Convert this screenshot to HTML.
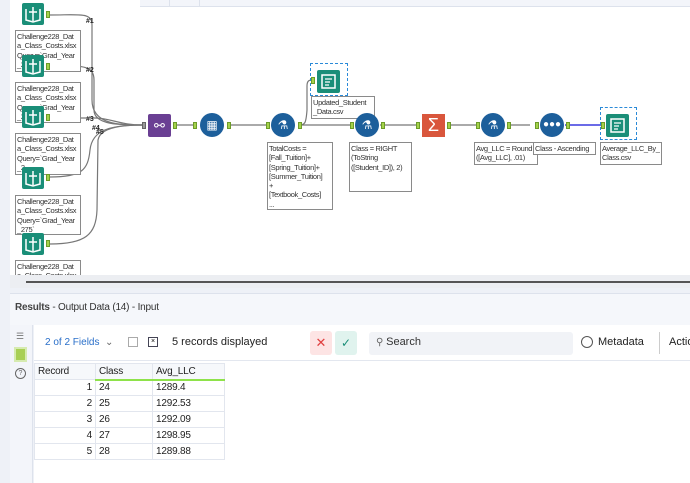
<!DOCTYPE html>
<html><head><meta charset="utf-8"><style>
*{margin:0;padding:0;box-sizing:border-box}
body{width:690px;height:483px;overflow:hidden;background:#eef1f7;font-family:"Liberation Sans",sans-serif;position:relative}
.a{position:absolute}
.lbl{position:absolute;background:#fff;border:1px solid #8a8a8a;font-size:7.5px;line-height:9.3px;color:#333;padding:1px 1px;overflow:hidden;white-space:nowrap;letter-spacing:-0.35px}
.book{position:absolute;width:22px;height:22px;background:#1a8e78;border-radius:2px}
.book svg,.doc svg{position:absolute;left:0;top:0}
.doc{position:absolute;width:23px;height:23px;background:#1a8e78;border-radius:2px}
.anc{position:absolute;width:4px;height:7px;background:#a4d24a;border:1px solid #6d9b2a}
.circ{position:absolute;width:24px;height:24px;border-radius:50%;background:#1d5f9b}
td,th{border:1px solid #e2e6ee;font-size:10px;height:16px;font-weight:normal;color:#222;padding:0 3px;text-align:left;letter-spacing:-0.2px}
</style></head><body>
<div class="a" style="left:10px;top:0;width:680px;height:275px;background:#fff"></div>
<div class="a" style="left:140px;top:0;width:550px;height:7px;background:#f3f5fa;border-bottom:1px solid #dde2ec"></div>
<div class="a" style="left:169px;top:0;width:1px;height:7px;background:#dde2ec"></div>
<div class="a" style="left:199px;top:0;width:1px;height:7px;background:#dde2ec"></div>
<div class="a" style="left:10px;top:275px;width:680px;height:13px;background:#eceef2"></div>
<div class="a" style="left:26px;top:281px;width:664px;height:2px;background:#555"></div>

<svg class="a" style="left:0;top:0" width="690" height="275">
<g fill="none" stroke="#777" stroke-width="1.2">
<path d="M50 15 C80 15 92 12 92 25 L92 100 C92 125 120 125 142 125"/>
<path d="M50 66 C80 66 94 64 94 80 L94 110 C94 125 120 125 142 125"/>
<path d="M50 118 L95 118 C110 118 120 125 142 125"/>
<path d="M50 177 C82 177 88 170 90 150 C92 130 110 125 142 125"/>
<path d="M50 244 C85 244 96 235 97 210 L98 140 C100 128 120 125 142 125"/>
<path d="M177 125 H197 M229 125 H270 M298 125 H350 M380 125 H420 M447 125 H477 M508 125 H530"/>
<path d="M298 125 C305 125 306 124 307 110 L307 86 C307 80 310 80 312 80"/>
</g>
<path d="M565 125 H602" stroke="#3a3adf" stroke-width="1.5"/>
<g font-size="7" fill="#222" font-weight="bold"><text x="86" y="23">#1</text><text x="86" y="72">#2</text><text x="86" y="121">#3</text><text x="92" y="130">#4</text><text x="96" y="134">#5</text></g>
</svg>

<div class="lbl" style="left:15px;top:30px;width:66px;height:42px">Challenge228_Dat<br>a_Class_Costs.xlsx<br>Query=`Grad_Year<br>_2</div>
<div class="lbl" style="left:15px;top:82px;width:66px;height:41px">Challenge228_Dat<br>a_Class_Costs.xlsx<br>Query=`Grad_Year<br>_2</div>
<div class="lbl" style="left:15px;top:133px;width:66px;height:42px">Challenge228_Dat<br>a_Class_Costs.xlsx<br>Query=`Grad_Year<br>_2</div>
<div class="lbl" style="left:15px;top:195px;width:66px;height:40px">Challenge228_Dat<br>a_Class_Costs.xlsx<br>Query=`Grad_Year<br>_275`</div>
<div class="lbl" style="left:15px;top:260px;width:66px;height:15px;border-bottom:none">Challenge228_Dat<br>a_Class_Costs.xlsx</div>

<div class="book" style="left:22px;top:3px"><svg width="22" height="22"><path d="M4 6 V17 L11 19 L18 17 V6 M11 8 V18 M7 9 H15 M11 4 V8" stroke="#fff" stroke-width="1.5" fill="none"/></svg></div>
<div class="book" style="left:22px;top:55px"><svg width="22" height="22"><path d="M4 6 V17 L11 19 L18 17 V6 M11 8 V18 M7 9 H15 M11 4 V8" stroke="#fff" stroke-width="1.5" fill="none"/></svg></div>
<div class="book" style="left:22px;top:106px"><svg width="22" height="22"><path d="M4 6 V17 L11 19 L18 17 V6 M11 8 V18 M7 9 H15 M11 4 V8" stroke="#fff" stroke-width="1.5" fill="none"/></svg></div>
<div class="book" style="left:22px;top:167px"><svg width="22" height="22"><path d="M4 6 V17 L11 19 L18 17 V6 M11 8 V18 M7 9 H15 M11 4 V8" stroke="#fff" stroke-width="1.5" fill="none"/></svg></div>
<div class="book" style="left:22px;top:233px"><svg width="22" height="22"><path d="M4 6 V17 L11 19 L18 17 V6 M11 8 V18 M7 9 H15 M11 4 V8" stroke="#fff" stroke-width="1.5" fill="none"/></svg></div>
<div class="anc" style="left:46px;top:11px"></div><div class="anc" style="left:46px;top:63px"></div><div class="anc" style="left:46px;top:114px"></div><div class="anc" style="left:46px;top:174px"></div><div class="anc" style="left:46px;top:240px"></div>

<div class="anc" style="left:142px;top:122px;background:#999;border-color:#666"></div>
<div class="a" style="left:148px;top:114px;width:23px;height:23px;background:#6a3f93;border-radius:2px;color:#fff;font-size:13px;text-align:center;line-height:23px">⚯</div>
<div class="anc" style="left:173px;top:122px"></div>
<div class="anc" style="left:193px;top:122px"></div>
<div class="circ" style="left:200px;top:113px;color:#fff;font-size:12px;text-align:center;line-height:24px">▦</div>
<div class="anc" style="left:227px;top:122px"></div>
<div class="anc" style="left:266px;top:122px"></div>
<div class="circ" style="left:271px;top:113px;color:#fff;font-size:12px;text-align:center;line-height:24px">⚗</div>
<div class="anc" style="left:298px;top:122px"></div>
<div class="lbl" style="left:267px;top:142px;width:66px;height:68px">TotalCosts =<br>[Fall_Tuition]+<br>[Spring_Tuition]+<br>[Summer_Tuition]<br>+<br>[Textbook_Costs]<br>...</div>

<div class="a" style="left:310px;top:63px;width:38px;height:33px;border:1px dashed #2a8ad8"></div>
<div class="anc" style="left:311px;top:77px"></div>
<div class="doc" style="left:317px;top:70px"><svg width="23" height="23"><rect x="5" y="5" width="13" height="13" fill="none" stroke="#fff" stroke-width="1.5"/><path d="M8 9 H15 M8 12 H13 M8 15 H12" stroke="#fff" stroke-width="1.2"/></svg></div>
<div class="lbl" style="left:311px;top:96px;width:64px;height:23px">Updated_Student<br>_Data.csv</div>

<div class="anc" style="left:350px;top:122px"></div>
<div class="circ" style="left:355px;top:113px;color:#fff;font-size:12px;text-align:center;line-height:24px">⚗</div>
<div class="anc" style="left:381px;top:122px"></div>
<div class="lbl" style="left:349px;top:142px;width:63px;height:50px">Class = RIGHT<br>(ToString<br>([Student_ID]), 2)</div>

<div class="anc" style="left:416px;top:122px"></div>
<div class="a" style="left:422px;top:114px;width:23px;height:23px;background:#d9563c;color:#fff;font-size:18px;text-align:center;line-height:23px">Σ</div>
<div class="anc" style="left:447px;top:122px"></div>
<div class="anc" style="left:476px;top:122px"></div>
<div class="circ" style="left:481px;top:113px;color:#fff;font-size:12px;text-align:center;line-height:24px">⚗</div>
<div class="anc" style="left:507px;top:122px"></div>
<div class="lbl" style="left:474px;top:142px;width:64px;height:23px">Avg_LLC = Round<br>([Avg_LLC], .01)</div>

<div class="anc" style="left:535px;top:122px"></div>
<div class="circ" style="left:540px;top:113px;color:#fff;font-size:10px;text-align:center;line-height:24px">●●●</div>
<div class="anc" style="left:566px;top:122px"></div>
<div class="lbl" style="left:533px;top:142px;width:63px;height:13px">Class - Ascending</div>

<div class="a" style="left:600px;top:107px;width:37px;height:33px;border:1px dashed #2a8ad8"></div>
<div class="anc" style="left:601px;top:122px"></div>
<div class="doc" style="left:606px;top:114px"><svg width="23" height="23"><rect x="5" y="5" width="13" height="13" fill="none" stroke="#fff" stroke-width="1.5"/><path d="M8 9 H15 M8 12 H13 M8 15 H12" stroke="#fff" stroke-width="1.2"/></svg></div>
<div class="lbl" style="left:600px;top:142px;width:62px;height:23px">Average_LLC_By_<br>Class.csv</div>

<div class="a" style="left:10px;top:293px;width:680px;height:32px;background:#f5f7fb;border-top:1px solid #dde2ec"></div>
<div class="a" style="left:15px;top:302px;font-size:10px;color:#333;letter-spacing:-0.2px"><b style="color:#444">Results</b> - Output Data (14) - Input</div>
<div class="a" style="left:10px;top:325px;width:23px;height:158px;background:#f3f5fa;border-right:1px solid #dde2ec"></div>
<div class="a" style="left:16px;top:331px;font-size:9px;color:#777">☰</div>
<div class="a" style="left:14px;top:347px;width:13px;height:15px;background:#a8cf54;border:2px solid #d6ebb0"></div>
<div class="a" style="left:15px;top:368px;width:11px;height:11px;border:1px solid #666;border-radius:50%;font-size:7px;text-align:center;line-height:9px;color:#666">?</div>
<div class="a" style="left:34px;top:325px;width:656px;height:158px;background:#fff"></div>
<div class="a" style="left:34px;top:360px;width:656px;height:1px;background:#e3e7ef"></div>
<div class="a" style="left:45px;top:337px;font-size:10px;color:#2a6fc9">2 of 2 Fields&nbsp; <span style="color:#666">⌄</span></div>
<div class="a" style="left:128px;top:337px;width:10px;height:10px;border:1px solid #aaa"></div>
<div class="a" style="left:148px;top:337px;width:10px;height:10px;border:1.5px solid #445;font-size:7px;line-height:7px;text-align:center">×</div>
<div class="a" style="left:172px;top:336px;font-size:11px;color:#222">5 records displayed</div>
<div class="a" style="left:310px;top:331px;width:22px;height:24px;background:#fde4e4;border-radius:3px;color:#e04040;text-align:center;line-height:24px;font-size:13px">✕</div>
<div class="a" style="left:335px;top:331px;width:22px;height:24px;background:#e0f3ee;border-radius:3px;color:#1a8e78;text-align:center;line-height:24px;font-size:12px">✓</div>
<div class="a" style="left:369px;top:332px;width:204px;height:23px;background:#f1f3f7;border-radius:3px"></div>
<div class="a" style="left:376px;top:336px;font-size:10px;color:#666">⚲ <span style="font-size:11px;color:#333">Search</span></div>
<div class="a" style="left:581px;top:336px;width:12px;height:12px;border:1px solid #555;border-radius:50%"></div>
<div class="a" style="left:598px;top:336px;font-size:11px;color:#222">Metadata</div>
<div class="a" style="left:659px;top:332px;width:1px;height:22px;background:#ccc"></div>
<div class="a" style="left:669px;top:336px;font-size:11px;color:#222">Actio</div>
<table class="a" style="left:34px;top:363px;border-collapse:collapse">
<tr style="background:#f6f8fb"><th style="width:61px">Record</th><th style="width:57px;border-bottom:2px solid #8ee24a">Class</th><th style="width:72px;border-bottom:2px solid #8ee24a">Avg_LLC</th></tr>
<tr><td style="text-align:right">1</td><td>24</td><td>1289.4</td></tr>
<tr><td style="text-align:right">2</td><td>25</td><td>1292.53</td></tr>
<tr><td style="text-align:right">3</td><td>26</td><td>1292.09</td></tr>
<tr><td style="text-align:right">4</td><td>27</td><td>1298.95</td></tr>
<tr><td style="text-align:right">5</td><td>28</td><td>1289.88</td></tr>
</table>
</body></html>
